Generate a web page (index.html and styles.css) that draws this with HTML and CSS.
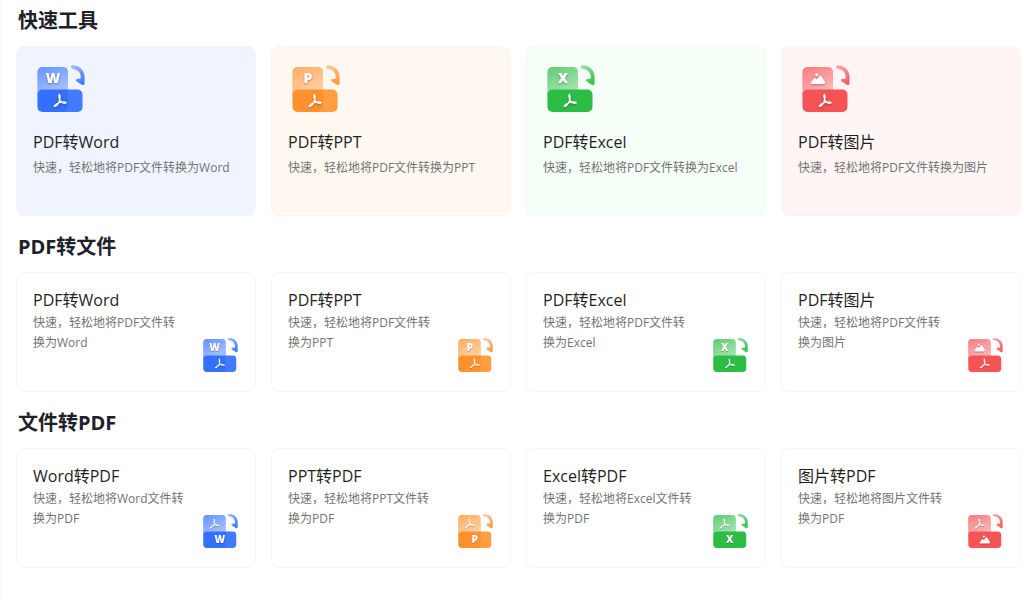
FILE: index.html
```
<!DOCTYPE html>
<html lang="zh-CN">
<head>
<meta charset="utf-8">
<meta name="viewport" content="width=device-width, initial-scale=1">
<title>PDF转换工具</title>
<link rel="stylesheet" href="styles.css">
</head>
<body>
<svg class="sprite" aria-hidden="true">
  <defs>
    <linearGradient id="fade-panel" x1="0" y1="0" x2="0.4" y2="1">
      <stop offset="0" stop-color="#fff" stop-opacity="0.24"/>
      <stop offset="1" stop-color="#fff" stop-opacity="0.62"/>
    </linearGradient>
    <linearGradient id="fade-arrow" x1="0" y1="0" x2="0.6" y2="1">
      <stop offset="0" stop-color="#fff" stop-opacity="0.55"/>
      <stop offset="1" stop-color="#fff" stop-opacity="0.08"/>
    </linearGradient>
    <path id="arrow" d="M42.5 5.600C49.500 5.500 54.500 10.400 54.500 17.200V23.600C54.500 25 53.200 25.600 51.900 24.700L46.800 21.600C45.400 20.600 45.800 19.200 47.400 19L50.800 18.600C51.200 13.400 48.600 9.600 43 8.800C40.600 8.400 40.600 5.700 42.500 5.600Z"/>
    <symbol id="frame" viewBox="3 3 56 56">
      <rect x="7.5" y="7" width="30.500" height="34" rx="5" fill="currentColor"/>
      <rect x="7.500" y="7" width="30.500" height="34" rx="5" fill="url(#fade-panel)"/>
      <rect x="7.500" y="29.500" width="45" height="22.500" rx="5" fill="currentColor"/>
      <path class="overlap" d="M38 29.500h9.500a5 5 0 0 1 5 5v12.500a5 5 0 0 1-5 5H33a5 5 0 0 0 5-5z" fill="#fff"/>
      <use href="#arrow" fill="currentColor"/>
      <use href="#arrow" fill="url(#fade-arrow)"/>
    </symbol>
    <g id="pdf" fill="none" stroke="#fff" stroke-width="1.300" stroke-linecap="round" stroke-linejoin="round">
      <path d="M-0.600-6C-1.600-4.600-0.600-1.400 0.600 0.600C2 2.800 4.600 3.200 6.200 2.200M-0.600-6C0.600-4.600 0.200-1.600-1.200 1.800C-2.800 5.200-4.800 6.400-5.800 5.800M-5.800 5.800C-5.600 4.400-2.600 2.400 0.600 1.800C3 1.300 5.600 1.400 6.200 2.200"/>
    </g>
    <g id="image" fill="#fff">
      <circle cx="-1.200" cy="-4.300" r="1.500"/>
      <path d="M-7 3.500L-3.800-0.800Q-3.200-1.600-2.500-0.800L-1.200 0.600L1.400-2.900Q2.300-3.900 3.200-2.900L7 2.800Q7.500 5 5.700 5H-5.800Q-7.700 5-7 3.500Z"/>
    </g>
  </defs>
</svg>

<main class="page">
  <section class="group">
    <h2 class="group-title">快速工具</h2>
    <div class="grid">
      <a class="card featured blue" href="#">
        <svg class="icon" viewBox="3 3 56 56" aria-hidden="true"><use href="#frame" x="3" y="3" width="56" height="56"/><g class="glyph"><text x="23" y="23">W</text><use href="#pdf" x="30" y="40.500"/></g></svg>
        <span class="text"><span class="name">PDF转Word</span><span class="desc">快速，轻松地将PDF文件转换为Word</span></span>
      </a>
      <a class="card featured orange" href="#">
        <svg class="icon" viewBox="3 3 56 56" aria-hidden="true"><use href="#frame" x="3" y="3" width="56" height="56"/><g class="glyph"><text x="23" y="23">P</text><use href="#pdf" x="30" y="40.500"/></g></svg>
        <span class="text"><span class="name">PDF转PPT</span><span class="desc">快速，轻松地将PDF文件转换为PPT</span></span>
      </a>
      <a class="card featured green" href="#">
        <svg class="icon" viewBox="3 3 56 56" aria-hidden="true"><use href="#frame" x="3" y="3" width="56" height="56"/><g class="glyph"><text x="23" y="23">X</text><use href="#pdf" x="30" y="40.500"/></g></svg>
        <span class="text"><span class="name">PDF转Excel</span><span class="desc">快速，轻松地将PDF文件转换为Excel</span></span>
      </a>
      <a class="card featured red" href="#">
        <svg class="icon" viewBox="3 3 56 56" aria-hidden="true"><use href="#frame" x="3" y="3" width="56" height="56"/><g class="glyph"><use href="#image" x="23" y="19"/><use href="#pdf" x="30" y="40.500"/></g></svg>
        <span class="text"><span class="name">PDF转图片</span><span class="desc">快速，轻松地将PDF文件转换为图片</span></span>
      </a>
    </div>
  </section>

  <section class="group">
    <h2 class="group-title">PDF转文件</h2>
    <div class="grid">
      <a class="card compact blue" href="#">
        <span class="text"><span class="name">PDF转Word</span><span class="desc">快速，轻松地将PDF文件转换为Word</span></span>
        <svg class="icon" viewBox="3 3 56 56" aria-hidden="true"><use href="#frame" x="3" y="3" width="56" height="56"/><g class="glyph"><text x="23" y="23">W</text><use href="#pdf" x="30" y="40.500"/></g></svg>
      </a>
      <a class="card compact orange" href="#">
        <span class="text"><span class="name">PDF转PPT</span><span class="desc">快速，轻松地将PDF文件转换为PPT</span></span>
        <svg class="icon" viewBox="3 3 56 56" aria-hidden="true"><use href="#frame" x="3" y="3" width="56" height="56"/><g class="glyph"><text x="23" y="23">P</text><use href="#pdf" x="30" y="40.500"/></g></svg>
      </a>
      <a class="card compact green" href="#">
        <span class="text"><span class="name">PDF转Excel</span><span class="desc">快速，轻松地将PDF文件转换为Excel</span></span>
        <svg class="icon" viewBox="3 3 56 56" aria-hidden="true"><use href="#frame" x="3" y="3" width="56" height="56"/><g class="glyph"><text x="23" y="23">X</text><use href="#pdf" x="30" y="40.500"/></g></svg>
      </a>
      <a class="card compact red" href="#">
        <span class="text"><span class="name">PDF转图片</span><span class="desc">快速，轻松地将PDF文件转换为图片</span></span>
        <svg class="icon" viewBox="3 3 56 56" aria-hidden="true"><use href="#frame" x="3" y="3" width="56" height="56"/><g class="glyph"><use href="#image" x="23" y="19"/><use href="#pdf" x="30" y="40.500"/></g></svg>
      </a>
    </div>
  </section>

  <section class="group">
    <h2 class="group-title">文件转PDF</h2>
    <div class="grid">
      <a class="card compact blue" href="#">
        <span class="text"><span class="name">Word转PDF</span><span class="desc">快速，轻松地将Word文件转换为PDF</span></span>
        <svg class="icon" viewBox="3 3 56 56" aria-hidden="true"><use href="#frame" x="3" y="3" width="56" height="56"/><g class="glyph"><use href="#pdf" x="23" y="19"/><text x="30" y="45">W</text></g></svg>
      </a>
      <a class="card compact orange" href="#">
        <span class="text"><span class="name">PPT转PDF</span><span class="desc">快速，轻松地将PPT文件转换为PDF</span></span>
        <svg class="icon" viewBox="3 3 56 56" aria-hidden="true"><use href="#frame" x="3" y="3" width="56" height="56"/><g class="glyph"><use href="#pdf" x="23" y="19"/><text x="30" y="45">P</text></g></svg>
      </a>
      <a class="card compact green" href="#">
        <span class="text"><span class="name">Excel转PDF</span><span class="desc">快速，轻松地将Excel文件转换为PDF</span></span>
        <svg class="icon" viewBox="3 3 56 56" aria-hidden="true"><use href="#frame" x="3" y="3" width="56" height="56"/><g class="glyph"><use href="#pdf" x="23" y="19"/><text x="30" y="45">X</text></g></svg>
      </a>
      <a class="card compact red" href="#">
        <span class="text"><span class="name">图片转PDF</span><span class="desc">快速，轻松地将图片文件转换为PDF</span></span>
        <svg class="icon" viewBox="3 3 56 56" aria-hidden="true"><use href="#frame" x="3" y="3" width="56" height="56"/><g class="glyph"><use href="#pdf" x="23" y="19"/><use href="#image" x="30" y="41"/></g></svg>
      </a>
    </div>
  </section>
</main>
</body>
</html>
```

FILE: styles.css
```
* {
  box-sizing: border-box;
}

body {
  margin: 0;
  background: #fff;
  color: #1f1f1f;
  font-family: "Open Sans", "Noto Sans CJK SC", sans-serif;
}

.sprite {
  position: absolute;
  width: 0;
  height: 0;
}

.page {
  display: flex;
  flex-direction: column;
  gap: 17px;
  min-height: 100vh;
  padding: 7px 3px 16px 15px;
  border-left: 1px solid #f7f8fa;
}

.group {
  display: flex;
  flex-direction: column;
  gap: 11px;
}

.group-title {
  margin: 0;
  padding-left: 2px;
  color: #1d2129;
  font-size: 20px;
  font-weight: 700;
  line-height: 28px;
}

.grid {
  display: grid;
  grid-template-columns: repeat(4, minmax(0, 1fr));
  gap: 15px;
}

.card {
  display: flex;
  border: 1px solid #f6f6f8;
  border-radius: 8px;
  color: inherit;
  text-decoration: none;
}

.text {
  display: flex;
  flex-direction: column;
}

.name {
  font-size: 16px;
  line-height: 24px;
}

.desc {
  color: #737373;
  font-size: 12px;
  line-height: 20px;
}

.icon {
  flex: none;
  color: var(--accent);
}

.overlap {
  fill-opacity: var(--overlap);
}

.glyph {
  filter: drop-shadow(0 1px 1px rgba(0, 0, 0, 0.3));
}

.glyph text {
  fill: #fff;
  font-size: 14px;
  font-weight: 800;
  text-anchor: middle;
}

.featured {
  flex-direction: column;
  gap: 11px;
  min-height: 170px;
  padding: 16px;
  background: var(--tint);
}

.featured .text {
  gap: 4px;
}

.featured .icon {
  width: 56px;
  height: 56px;
}

.compact {
  gap: 14px;
  min-height: 120px;
  padding: 15px 14px 14px 16px;
  background: #fff;
}

.compact .text {
  flex: 1;
  gap: 1px;
}

.compact .icon {
  align-self: flex-end;
  width: 41px;
  height: 41px;
}

.blue {
  --accent: #3370ff;
  --tint: #eff4ff;
  --overlap: 0.08;
}

.orange {
  --accent: #ff922e;
  --tint: #fff8f0;
  --overlap: 0.1;
}

.green {
  --accent: #2dbd46;
  --tint: #f5fff8;
  --overlap: 0;
}

.red {
  --accent: #f55356;
  --tint: #fff5f5;
  --overlap: 0;
}
```
